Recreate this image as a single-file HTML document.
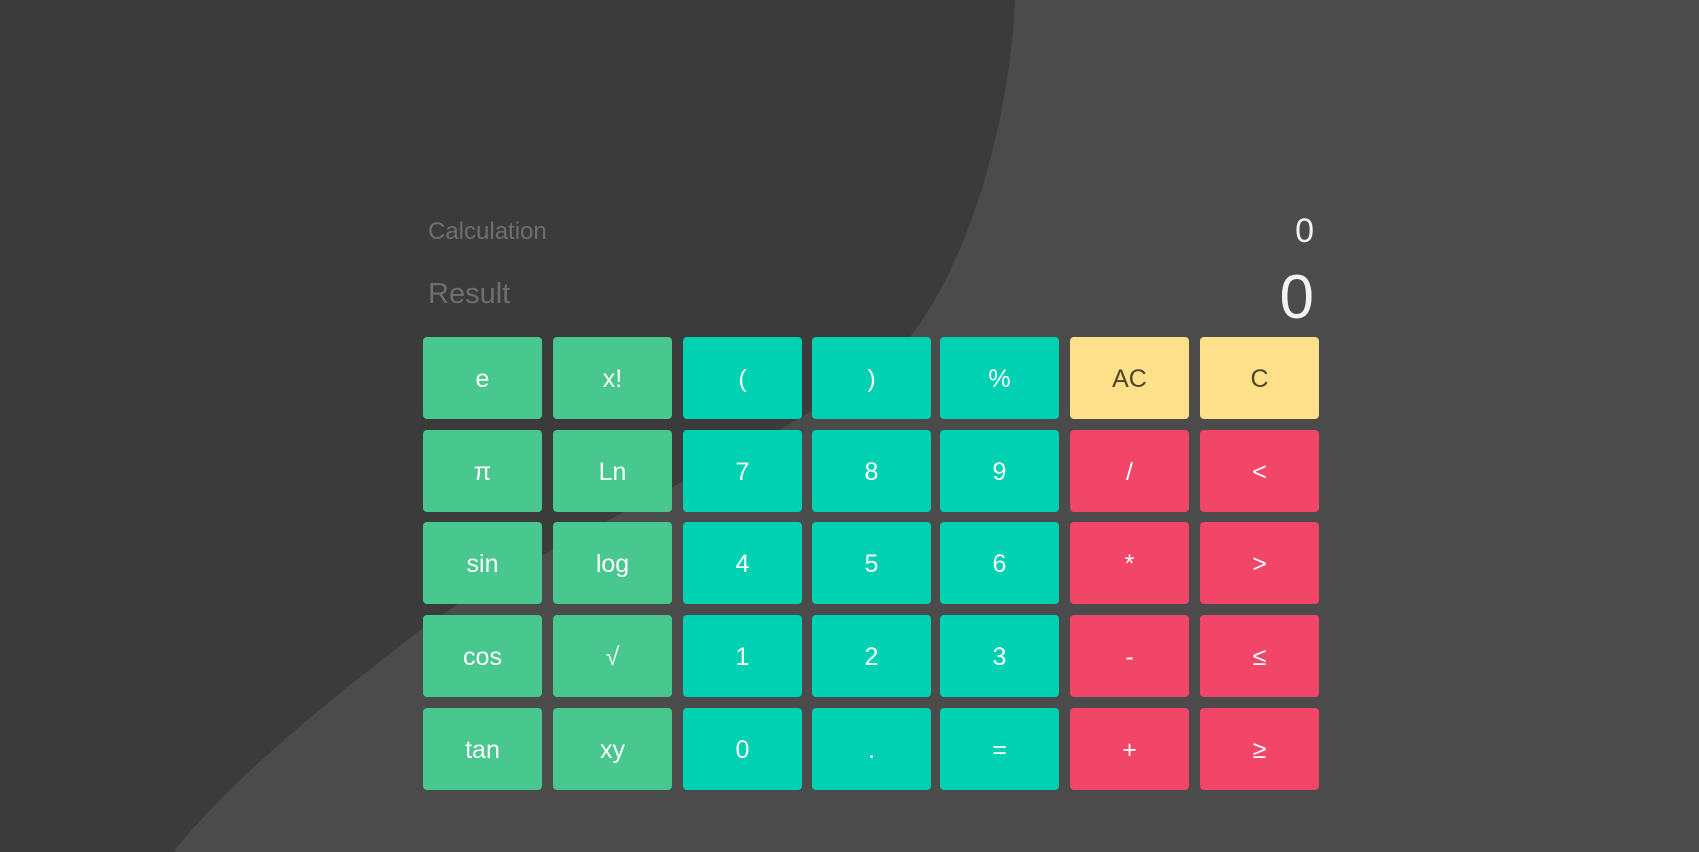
<!DOCTYPE html>
<html><head><meta charset="utf-8"><style>
html,body{margin:0;padding:0;width:1699px;height:852px;overflow:hidden;background:#4a4b4a;font-family:"Liberation Sans",sans-serif;}
svg.bg{position:absolute;left:0;top:0}
.lbl{position:absolute;color:#6f6f6f;}
.val{position:absolute;color:#f2f2f2;text-align:right;}
.b{position:absolute;width:119px;height:82px;border-radius:4px;color:#fff;font-size:25px;display:flex;align-items:center;justify-content:center;padding-top:3px;box-sizing:border-box;}
.g{background:#48c78e}.t{background:#00d1b2}.y{background:#ffe08a;color:rgba(0,0,0,.7)}.r{background:#f14668}
</style></head><body>
<svg class="bg" width="1699" height="852"><path d="M0,0 H1015 C1010,120 970,260 910,337 C840,420 560,530 423,628 C330,700 240,770 173,852 L0,852 Z" fill="#3b3b3b"/></svg>
<div class="lbl" style="left:428px;top:218px;font-size:24px">Calculation</div>
<div class="lbl" style="left:428px;top:278px;font-size:29px">Result</div>
<div class="val" style="right:385px;top:212px;font-size:34px">0</div>
<div class="val" style="right:385px;top:263px;font-size:62px;line-height:70px">0</div>
<div id="k"></div>
<script>
var L=[["e","g"],["x!","g"],["(","t"],[")","t"],["%","t"],["AC","y"],["C","y"],
["π","g"],["Ln","g"],["7","t"],["8","t"],["9","t"],["/","r"],["<","r"],
["sin","g"],["log","g"],["4","t"],["5","t"],["6","t"],["*","r"],[">","r"],
["cos","g"],["√","g"],["1","t"],["2","t"],["3","t"],["-","r"],["≤","r"],
["tan","g"],["xy","g"],["0","t"],[".","t"],["=","t"],["+","r"],["≥","r"]];
var xs=[423,553,683,812,940,1070,1200],ys=[337,430,522,615,708],h="";
L.forEach(function(a,i){h+='<div class="b '+a[1]+'" style="left:'+xs[i%7]+'px;top:'+ys[Math.floor(i/7)]+'px">'+a[0].replace("<","&lt;").replace(">","&gt;")+'</div>';});
document.getElementById("k").innerHTML=h;
</script>
</body></html>
